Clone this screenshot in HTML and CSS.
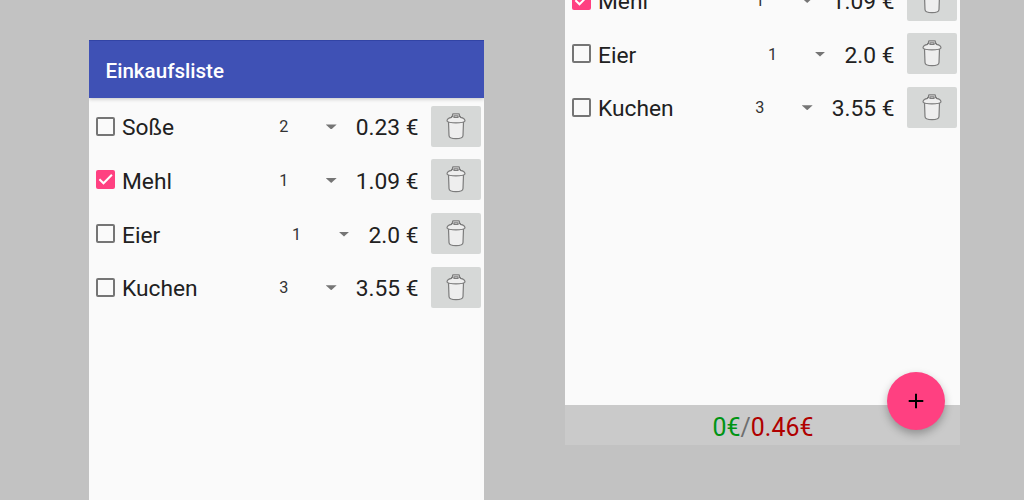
FILE: index.html
```html
<!DOCTYPE html>
<html lang="de">
<head>
<meta charset="utf-8">
<title>Einkaufsliste</title>
<link rel="stylesheet" href="styles.css">
</head>
<body>
<svg class="defs" width="0" height="0">
  <symbol id="trash" viewBox="0 0 20 27">
    <path class="bin" d="M2.5 9L3 22.4Q3.1 25.6 10 25.6Q16.9 25.6 17 22.4L17.5 9Z"/>
    <path class="bin" d="M5.6 4.4V3.4H6.6V1.6Q6.6.8 7.4.8H12.6Q13.4.8 13.4 1.6V3.4H14.4V4.4Q18.9 5.2 19 8Q17.6 9.8 10 9.8Q2.4 9.8 1 8Q1.1 5.2 5.6 4.4Z"/>
    <path class="bin" d="M8 2.9H12V4.5H8Z"/>
  </symbol>
  <symbol id="check" viewBox="0 0 19 19">
    <path class="tick" d="M3.4 9.2L7.5 13.3L15.9 4.7"/>
  </symbol>
</svg>
<main class="stage">
  <section class="screen screen-top">
    <header class="toolbar">Einkaufsliste</header>
    <div class="list">
      <div class="row"><span class="box"></span><span class="name">Soße</span><span class="qty">2</span><span class="caret"></span><span class="price">0.23 €</span><span class="delete"><svg><use href="#trash"/></svg></span></div>
      <div class="row"><span class="box checked"><svg><use href="#check"/></svg></span><span class="name">Mehl</span><span class="qty">1</span><span class="caret"></span><span class="price">1.09 €</span><span class="delete"><svg><use href="#trash"/></svg></span></div>
      <div class="row"><span class="box"></span><span class="name">Eier</span><span class="qty">1</span><span class="caret"></span><span class="price">2.0 €</span><span class="delete"><svg><use href="#trash"/></svg></span></div>
      <div class="row"><span class="box"></span><span class="name">Kuchen</span><span class="qty">3</span><span class="caret"></span><span class="price">3.55 €</span><span class="delete"><svg><use href="#trash"/></svg></span></div>
    </div>
  </section>
  <section class="screen screen-bottom">
    <div class="list scrolled">
      <div class="row"><span class="box checked"><svg><use href="#check"/></svg></span><span class="name">Mehl</span><span class="qty">1</span><span class="caret"></span><span class="price">1.09 €</span><span class="delete"><svg><use href="#trash"/></svg></span></div>
      <div class="row"><span class="box"></span><span class="name">Eier</span><span class="qty">1</span><span class="caret"></span><span class="price">2.0 €</span><span class="delete"><svg><use href="#trash"/></svg></span></div>
      <div class="row"><span class="box"></span><span class="name">Kuchen</span><span class="qty">3</span><span class="caret"></span><span class="price">3.55 €</span><span class="delete"><svg><use href="#trash"/></svg></span></div>
    </div>
    <footer class="total"><span class="paid">0€</span>/<span class="open">0.46€</span></footer>
    <div class="fab"><svg viewBox="0 0 16 16"><path d="M8 .7V15.3M.7 8H15.3"/></svg></div>
  </section>
</main>
</body>
</html>
```
FILE: styles.css
```css
* { box-sizing: border-box; }
body {
  margin: 0;
  background: #c2c2c2;
  font-family: Roboto, "Liberation Sans", sans-serif;
  color: #212121;
}
.defs { display: block; }
.stage {
  display: flex;
  gap: 81px;
  height: 500px;
  padding-left: 89px;
  overflow: hidden;
}
.screen {
  display: flex;
  flex-direction: column;
  width: 395px;
  background: #fafafa;
}
.screen-top { margin-top: 40px; }
.screen-bottom { position: relative; height: 445px; }
.toolbar {
  height: 58.4px;
  flex: none;
  padding: 2px 0 0 16.5px;
  border-top: 1px solid #3244a5;
  background: #3f51b5;
  box-shadow: 0 1px 4px rgba(0, 0, 0, .22);
  clip-path: inset(0 0 -8px 0);
  color: #fff;
  font-size: 20.6px;
  font-weight: 500;
  line-height: 57px;
}
.list { flex: 1; padding-top: 1.2px; }
.scrolled { padding-top: 0; margin-top: -26.8px; }
.row {
  display: flex;
  align-items: center;
  height: 53.6px;
  padding: 0 3.5px 0 7px;
}
.box {
  width: 19px;
  height: 19px;
  flex: none;
  border: 2px solid #757575;
  border-radius: 2px;
}
.box.checked { border: 0; background: #ff4081; }
.box svg { display: block; width: 19px; height: 19px; }
.tick { fill: none; stroke: #fff; stroke-width: 2; }
.name { flex: 1; padding: 3.2px 0 0 7px; font-size: 22.75px; line-height: 27px; }
.qty { width: 46.5px; padding-top: 1.2px; font-size: 16.2px; line-height: 19px; color: #333; }
.caret {
  width: 11px;
  height: 5px;
  margin: 1px 19px 0 0;
  background: #757575;
  clip-path: polygon(0 0, 100% 0, 50% 100%);
}
.price { padding-top: 3.2px; font-size: 22.75px; line-height: 27px; white-space: pre; }
.delete {
  display: flex;
  align-items: center;
  justify-content: center;
  width: 50px;
  height: 41px;
  margin-left: 12px;
  border-radius: 2px;
  background: #d6d8d7;
}
.delete svg { width: 20px; height: 27px; }
.bin { fill: #eee; stroke: #7c7c7c; stroke-width: 1.2; stroke-linejoin: round; }
.total {
  height: 40px;
  flex: none;
  padding: 3px 0 0 1px;
  background: #cacaca;
  color: #6e6e6e;
  font-size: 24.9px;
  line-height: 40px;
  text-align: center;
}
.paid { color: #009414; }
.open { color: #b00000; }
.fab {
  position: absolute;
  right: 15.5px;
  bottom: 15px;
  display: flex;
  align-items: center;
  justify-content: center;
  width: 58px;
  height: 58px;
  border-radius: 50%;
  background: #ff4081;
  box-shadow: 0 4px 8px rgba(0, 0, 0, .28);
}
.fab svg { width: 16px; height: 16px; fill: none; stroke: #000; stroke-width: 2; }
```
